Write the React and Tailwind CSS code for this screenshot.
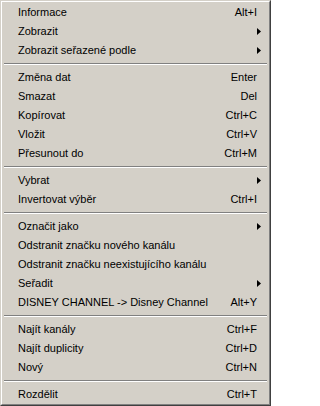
import React from "react";

const groups = [
  [
    { label: "Informace", key: "Alt+I" },
    { label: "Zobrazit", sub: true },
    { label: "Zobrazit seřazené podle", sub: true },
  ],
  [
    { label: "Změna dat", key: "Enter" },
    { label: "Smazat", key: "Del" },
    { label: "Kopírovat", key: "Ctrl+C" },
    { label: "Vložit", key: "Ctrl+V" },
    { label: "Přesunout do", key: "Ctrl+M" },
  ],
  [
    { label: "Vybrat", sub: true },
    { label: "Invertovat výběr", key: "Ctrl+I" },
  ],
  [
    { label: "Označit jako", sub: true },
    { label: "Odstranit značku nového kanálu" },
    { label: "Odstranit značku neexistujícího kanálu" },
    { label: "Seřadit", sub: true },
    { label: "DISNEY CHANNEL -> Disney Channel", key: "Alt+Y" },
  ],
  [
    { label: "Najít kanály", key: "Ctrl+F" },
    { label: "Najít duplicity", key: "Ctrl+D" },
    { label: "Nový", key: "Ctrl+N" },
  ],
  [{ label: "Rozdělit", key: "Ctrl+T" }],
];

const Arrow = () => (
  <svg width="4" height="7" viewBox="0 0 4 7" className="mr-[7px] shrink-0">
    <path d="M0 0 L4 3.5 L0 7 Z" fill="#000" />
  </svg>
);

const Item = ({ label, shortcut, sub }) => (
  <div className="flex items-center h-[19px] pl-[15px] leading-[19px]">
    <span className="flex-1 whitespace-nowrap">{label}</span>
    {shortcut && <span className="mr-[11px] whitespace-nowrap">{shortcut}</span>}
    {sub && <Arrow />}
  </div>
);

const Separator = () => (
  <div className="h-[8px] flex flex-col justify-center mx-[1px]">
    <div className="border-t border-t-[#808080] border-b border-b-white" />
  </div>
);

export default function App() {
  return (
    <div className="w-[271px] h-[406px] overflow-hidden bg-[#d4d0c8] font-['Liberation_Sans',Arial,sans-serif] text-[11px] text-black">
      {/* outer bevel */}
      <div className="h-full border border-t-[#d4d0c8] border-l-[#d4d0c8] border-b-[#404040] border-r-[#404040]">
        {/* inner bevel */}
        <div className="h-full border border-t-white border-l-white border-b-[#808080] border-r-[#808080] p-[1px]">
          {groups.map((g, i) => (
            <div key={i}>
              {i > 0 && <Separator />}
              {g.map((it) => (
                <Item key={it.label} label={it.label} shortcut={it.key} sub={it.sub} />
              ))}
            </div>
          ))}
        </div>
      </div>
    </div>
  );
}
